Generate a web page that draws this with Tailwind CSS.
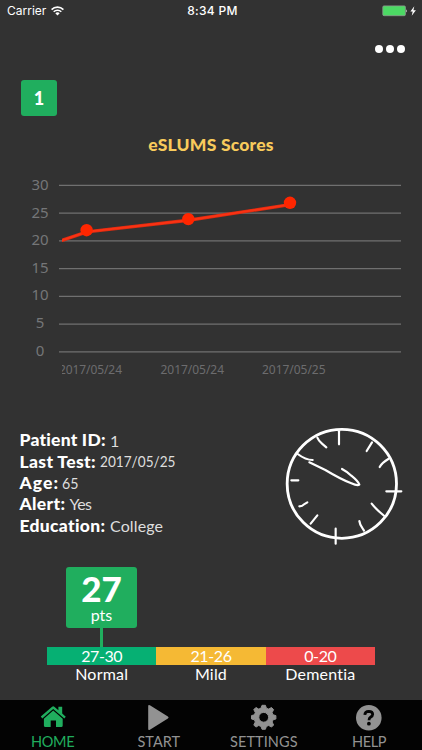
<!DOCTYPE html>
<html lang="en">
<head>
  <meta charset="UTF-8" />
  <meta name="viewport" content="width=device-width, initial-scale=1.0" />
  <title>eSLUMS - Home</title>
  <script src="https://cdn.jsdelivr.net/npm/@tailwindcss/browser@4"></script>
</head>
<body class="bg-[#323232] text-white font-['Lato',sans-serif] [font-variant-ligatures:none]">
  <div class="w-[422px] h-[750px] flex flex-col overflow-hidden whitespace-nowrap">

    <!-- Status bar -->
    <div class="h-[22px] shrink-0 grid grid-cols-3 items-center pl-[7px] pr-[4px] font-['Inter',sans-serif] text-[12px]">
      <div class="flex items-center gap-[5px]">
        <span>Carrier</span>
        <svg class="w-[13px] h-[10px]" viewBox="0 0 13 10" fill="none" stroke="white" stroke-width="1.6">
          <path d="M0.6 3.6a8.3 8.3 0 0 1 11.8 0" />
          <path d="M2.7 5.8a5.3 5.3 0 0 1 7.6 0" />
          <path d="M6.5 9.6L4.3 7.3a3.2 3.2 0 0 1 4.4 0z" fill="white" stroke="none" />
        </svg>
      </div>
      <div class="text-center font-medium tracking-[0.3px]">8:34 PM</div>
      <svg class="w-[36px] h-[12px] justify-self-end" viewBox="0 0 36 12">
        <rect x="0.8" y="0.9" width="22.6" height="9.8" rx="1.2" fill="#4cd964" stroke="#8d9a8f" stroke-width="0.8" />
        <path d="M24.2 4.2q1.8 1.6 0 3.4z" fill="#ddd" />
        <path d="M32.3 1.2L28.4 6.5h2.3l-1 4.3 4.2-5.5h-2.5z" fill="white" />
      </svg>
    </div>

    <!-- Menu -->
    <div class="h-[58px] shrink-0 flex justify-end gap-[3px] pt-[23px] pr-[17px]">
      <span class="size-[8px] rounded-full bg-white"></span>
      <span class="size-[8px] rounded-full bg-white"></span>
      <span class="size-[8px] rounded-full bg-white"></span>
    </div>

    <div class="ml-[21px] size-[36px] shrink-0 rounded-[3px] bg-[#20ae5e] flex items-center justify-center text-[18px] font-black">1</div>

    <h1 class="mt-[17px] mb-px h-[24px] shrink-0 leading-6 text-center text-[17.5px] font-black tracking-[0.2px] text-[#f8cb5c]">eSLUMS Scores</h1>

    <!-- Score history -->
    <svg class="w-[422px] h-[226px] shrink-0 font-['Noto_Sans',sans-serif]" viewBox="0 158 422 226">
      <g stroke="#707070" stroke-width="1.4">
        <path d="M59 185.4H401M59 213.1H401M59 240.9H401M59 268.6H401M59 296.4H401M59 324.1H401M59 351.9H401" />
      </g>
      <g fill="#757678" font-size="15" text-anchor="middle">
        <text x="40" y="190.3">30</text>
        <text x="40" y="217.9">25</text>
        <text x="40" y="245.4">20</text>
        <text x="40" y="272.9">15</text>
        <text x="40" y="300.4">10</text>
        <text x="40" y="328">5</text>
        <text x="40" y="355.5">0</text>
      </g>
      <clipPath id="plot"><rect x="62" y="158" width="360" height="226" /></clipPath>
      <g clip-path="url(#plot)">
        <g fill="#6c6c6e" font-size="12">
          <text x="59" y="374" textLength="63">2017/05/24</text>
          <text x="160.5" y="374" textLength="63.5">2017/05/24</text>
          <text x="262" y="374" textLength="63.5">2017/05/25</text>
        </g>
        <path d="M55 242.8L62 240.3 87 231.8 188.5 220.3 290 204.6" fill="none" stroke="#d92c12" stroke-width="3.4" />
        <path d="M55 242.8L62 240.3 87 231.8 188.5 220.3 290 204.6" fill="none" stroke="#fa3213" stroke-width="2" />
      </g>
      <g fill="#ff2600">
        <circle cx="86.6" cy="230.2" r="6.2" />
        <circle cx="188.3" cy="219.1" r="6.2" />
        <circle cx="290" cy="202.8" r="6.2" />
      </g>
    </svg>

    <!-- Patient details -->
    <div class="mt-[36px] h-[130px] shrink-0 flex justify-between pr-[7px]">
      <svg class="w-[220px] h-[130px]" viewBox="0 420 220 130">
        <g font-size="17.5" font-weight="900" fill="white">
          <text x="19.5" y="446" textLength="86">Patient ID:</text>
          <text x="19.5" y="467.5" textLength="76">Last Test:</text>
          <text x="19.5" y="489" textLength="38.5">Age:</text>
          <text x="19.5" y="510.3" textLength="45.5">Alert:</text>
          <text x="19.5" y="531.7" textLength="85.5">Education:</text>
        </g>
        <g font-size="16" fill="#dedede">
          <text x="110" y="446.7">1</text>
          <text x="100" y="467" textLength="75.5" lengthAdjust="spacingAndGlyphs">2017/05/25</text>
          <text x="62" y="488.7" textLength="16.5" lengthAdjust="spacingAndGlyphs">65</text>
          <text x="69.5" y="510" textLength="22.5">Yes</text>
          <text x="110" y="531.5" textLength="53">College</text>
        </g>
      </svg>
      <!-- Clock drawing, hand sketched -->
      <svg class="w-[140px] h-[130px]" viewBox="0 0 420 390" fill="none" stroke="white" stroke-linecap="round" stroke-linejoin="round">
        <ellipse cx="200.5" cy="191.5" rx="164" ry="163.5" stroke-width="8.5" />
        <g stroke-width="6.5">
          <path d="M192 34V73" />
          <path d="M127 53Q131 63 141 71L154 82" />
          <path d="M68 102Q92 120 113 120" />
          <path d="M49 181H70" />
          <path d="M73 259Q82 259 87 253L97 247" />
          <path d="M127 286L107 311" />
          <path d="M182 326V371" />
          <path d="M253 303Q255 316 262 324L267 332" />
          <path d="M290 251Q303 268 328 288" />
          <path d="M334 214H379" />
          <path d="M340 117Q320 129 314 141" />
          <path d="M291 67L275 93" />
          <path d="M103 127L151 150Q196 177 229 190Q247 198 253 194Q250 184 229 167Q218 156 201 147" />
        </g>
      </svg>
    </div>

    <!-- Current score -->
    <div class="mt-[17px] ml-[47px] w-[328px] shrink-0">
      <div class="ml-[19px] w-[71px] flex flex-col items-center">
        <div class="w-full h-[61px] rounded-[3px] bg-[#20ae5e] flex flex-col items-center">
          <div class="mt-[3px] text-[35px] leading-[36px] font-black">27</div>
          <div class="mt-[2px] text-[16px] leading-[14px]">pts</div>
        </div>
        <div class="w-[3px] h-[19px] bg-[#20ae5e]"></div>
      </div>
      <div class="grid grid-cols-3 h-[18px] text-[16px] leading-[18px] tracking-[-0.4px] text-center">
        <div class="bg-[#06b073]">27-30</div>
        <div class="bg-[#f5b934]">21-26</div>
        <div class="bg-[#ed4a4b]">0-20</div>
      </div>
      <div class="grid grid-cols-3 h-[20px] text-[16px] leading-[18px] tracking-[0.2px] text-center">
        <div>Normal</div>
        <div>Mild</div>
        <div>Dementia</div>
      </div>
    </div>

    <!-- Tab bar -->
    <nav class="mt-auto h-[50px] shrink-0 bg-[#030303] grid grid-cols-4 text-[#929292]">
      <svg class="w-full h-[50px] text-[#20ae5e]" viewBox="0 700 105.5 50" fill="currentColor">
        <path d="M40.8 716.5L52.1 706.7Q53.2 705.8 54.3 706.7L58.4 710.3V706.8H62.2V713.6L65.8 716.7 64.3 718.6 53.2 709 42.3 718.6Z" />
        <path d="M43.9 718.8L53.2 710.6 62.7 718.8V725.5Q62.7 727 61.2 727H56V720.4H50.7V727H45.4Q43.9 727 43.9 725.5Z" />
        <text x="31" y="747" font-size="14.5" textLength="43.5">HOME</text>
      </svg>
      <svg class="w-full h-[50px]" viewBox="105.5 700 105.5 50" fill="currentColor">
        <path d="M147.7 706.2Q147.7 704.2 149.4 705.3L167.4 716.4Q168.9 717.5 167.4 718.6L149.4 729.7Q147.7 730.8 147.7 728.8Z" />
        <text x="137" y="747" font-size="14.5" textLength="42.5">START</text>
      </svg>
      <svg class="w-full h-[50px]" viewBox="211 700 105.5 50" fill="currentColor">
        <g transform="translate(263.7 717.3)">
          <path stroke="currentColor" stroke-width="1" stroke-linejoin="round" fill-rule="evenodd" d="M-1.7 -12H1.7L2.7 -9.1 5 -8.2 7.8 -9.8 9.9 -7.7 8.4 -4.7 9.3 -2.5 12.2 -1.7V1.7L9.3 2.5 8.4 4.7 9.9 7.7 7.8 9.8 5 8.2 2.7 9.1 1.7 12H-1.7L-2.7 9.1 -5 8.2 -7.8 9.8 -9.9 7.7 -8.4 4.7 -9.3 2.5 -12.2 1.7V-1.7L-9.3 -2.5 -8.4 -4.7 -9.9 -7.7 -7.8 -9.8 -5 -8.2 -2.7 -9.1ZM0 -4.9A4.9 4.9 0 1 0 0 4.9A4.9 4.9 0 1 0 0 -4.9Z" />
        </g>
        <text x="230" y="747" font-size="14.5" textLength="67.5">SETTINGS</text>
      </svg>
      <svg class="w-full h-[50px]" viewBox="316.5 700 105.5 50" fill="currentColor">
        <circle cx="368.3" cy="717.8" r="12.8" />
        <path d="M364.3 714.8Q364.5 711.4 368.3 711.3Q372.1 711.3 372.2 714.3Q372.2 716 370 717.2Q368.5 718.2 368.5 720.2" fill="none" stroke="#030303" stroke-width="2.8" />
        <circle cx="368.4" cy="723.7" r="1.9" fill="#030303" />
        <text x="351.5" y="747" font-size="14.5" textLength="34.5">HELP</text>
      </svg>
    </nav>
  </div>
</body>
</html>
